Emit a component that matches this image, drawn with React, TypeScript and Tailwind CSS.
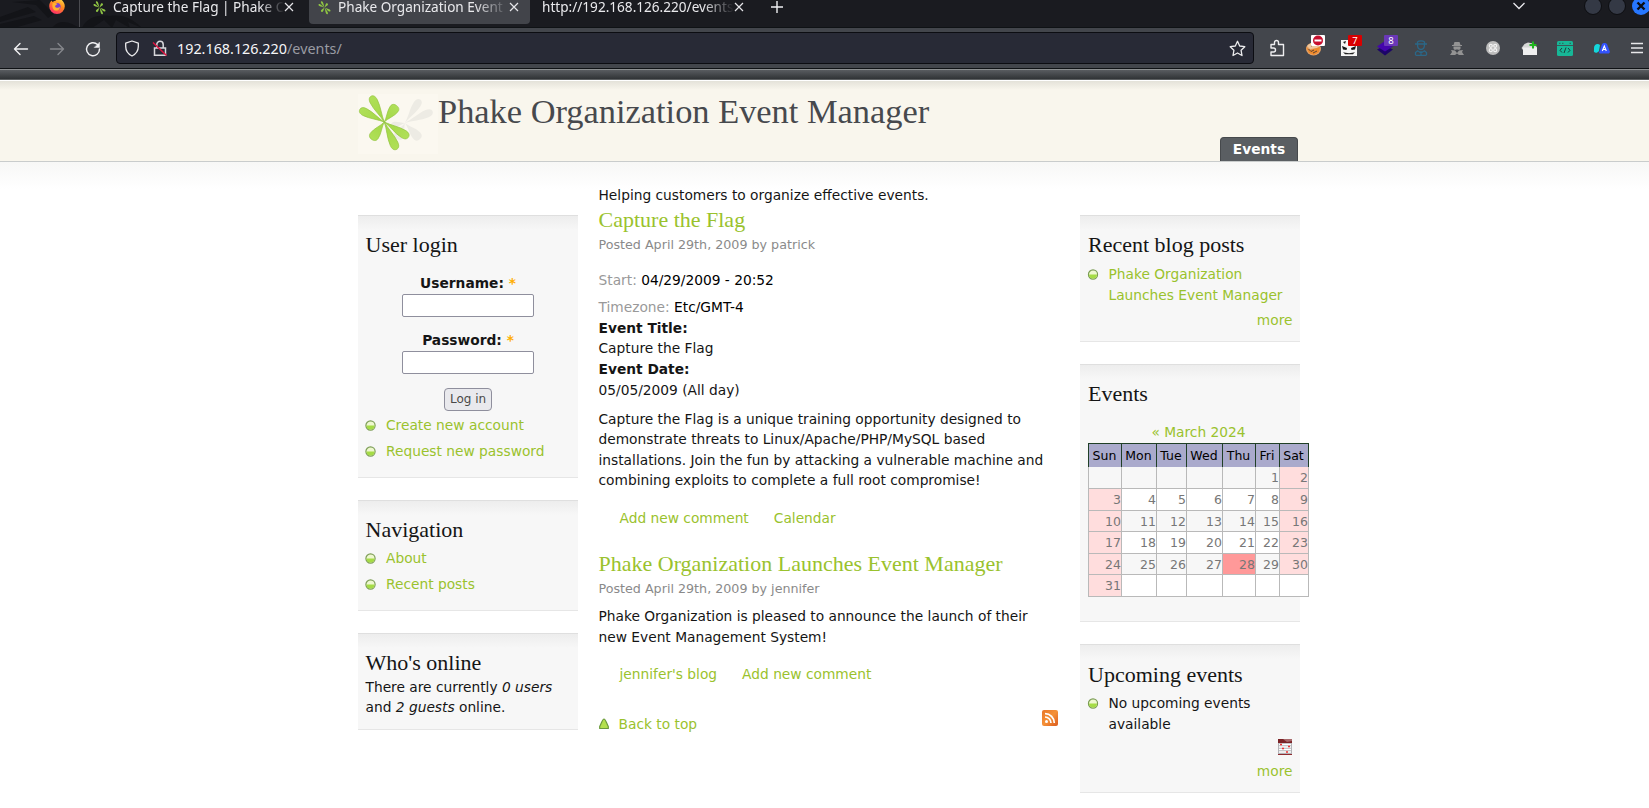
import type { ReactNode } from "react";

const PETAL = "M0 0C-.5 -7 -4.300 -16 -4.300 -24C-4.300 -28 -2.600 -30 0 -30C2.600 -30 4.300 -28 4.300 -24C4.300 -16 .5 -7 0 0Z";

type Petal = [angle: number, length: number, width: number];

const STAR: Petal[] = [
  [-27, 29, 0.9],
  [-63, 27.5, 0.9],
  [37, 20.5, 1.1],
  [122, 28.5, 0.95],
  [156, 30, 0.95],
  [216, 21.5, 1.1],
];
const SHADE: Petal[] = [
  [33, 28, 0.9],
  [67, 30, 0.9],
  [137, 22, 1.1],
  [206, 18, 1.1],
  [-100, 14, 0.7],
];

function Petals({ items }: { items: Petal[] }) {
  return (
    <>
      {items.map(([a, l, w]) => (
        <path key={a} d={PETAL} transform={`rotate(${a}) scale(${w} ${l / 30})`} />
      ))}
    </>
  );
}

function Logo() {
  return (
    <svg width="80" height="60" viewBox="0 0 80 60" className="block bg-[#fbf8f0]">
      <defs>
        <linearGradient id="leaf" gradientUnits="userSpaceOnUse" x1="0" y1="0" x2="0" y2="-30">
          <stop offset="0" stopColor="#a2d645" />
          <stop offset="1" stopColor="#b0e058" />
        </linearGradient>
      </defs>
      <g transform="translate(47 29)" fill="#edebe4">
        <Petals items={SHADE} />
      </g>
      <g transform="translate(26.300 28)" fill="url(#leaf)" stroke="#93c440" strokeWidth="0.7">
        <Petals items={STAR} />
      </g>
    </svg>
  );
}

function Favicon() {
  return (
    <svg width="15" height="15" viewBox="-31 -31 62 62" fill="#8fc544" className="shrink-0">
      <Petals items={STAR} />
    </svg>
  );
}

function Close() {
  return (
    <svg width="10" height="10" viewBox="0 0 10 10" stroke="#e6e6ea" strokeWidth="1.2" className="shrink-0">
      <path d="M1 1L9 9M9 1L1 9" />
    </svg>
  );
}

function Firefox() {
  return (
    <svg width="16" height="16" viewBox="0 0 16 16" className="shrink-0">
      <defs>
        <linearGradient id="ff" x1="0.8" y1="0" x2="0.3" y2="1">
          <stop offset="0" stopColor="#ffe14a" />
          <stop offset="0.45" stopColor="#ff8a1e" />
          <stop offset="1" stopColor="#ff2a6a" />
        </linearGradient>
      </defs>
      <path d="M8 1C9.5 .6 10 0 10 0C12.500 1.500 15.800 4 15.800 8.200A7.800 7.800 0 0 1 .2 8.200C.2 5.500 1.500 3.500 2.500 2.500L3.500 4C5 3 7 3 8 1Z" fill="url(#ff)" />
      <circle cx="8" cy="8.500" r="3.600" fill="#7a3fd0" />
      <path d="M3.500 5.500C5 4 7 5 8.500 6C7.500 7 6.500 7 6 8.500C7 10.500 10 10 11 8.500C11 12 8 13 6 12.500C3.500 11.500 3 8 3.500 5.500Z" fill="#ffb22e" />
    </svg>
  );
}

function TabBar() {
  return (
    <div className="relative flex h-7 items-start overflow-hidden border-b border-[#0f1215] bg-[#1a1b20] text-[13.600px] leading-5 text-[#e9e9ec]">
      <svg width="150" height="28" viewBox="0 0 150 28" className="absolute left-0 top-0" fill="#131418">
        <path d="M0 17L28 7L36 12L0 22ZM0 24L34 16L42 20L14 28H0ZM12 2L40 0L54 14L48 18L36 5ZM52 28C56 22 64 20 72 24L80 28ZM82 28C86 18 98 14 110 16C124 14 134 20 142 28L128 22L130 28L116 20L112 28L104 20L92 28Z" />
      </svg>
      <div className="relative flex h-7 w-20 shrink-0 justify-end border-r border-[#4a4b50] pr-[14px]">
        <div className="-mt-[2px]"><Firefox /></div>
      </div>
      <div className="relative -mt-[3px] flex h-5 w-[229px] shrink-0 items-center pl-3">
        <Favicon />
        <div className="ml-[6px] w-[171px] overflow-hidden whitespace-nowrap [mask-image:linear-gradient(to_right,black_86%,transparent)]">
          Capture the Flag | Phake C
        </div>
        <Close />
      </div>
      <div className="h-6 w-[221px] shrink-0 rounded-b-[4px] bg-[#42444a]">
        <div className="-mt-[3px] flex h-5 items-center pl-2">
          <Favicon />
          <div className="ml-[6px] w-[171px] overflow-hidden whitespace-nowrap [mask-image:linear-gradient(to_right,black_80%,transparent)]">
            Phake Organization Event
          </div>
          <Close />
        </div>
      </div>
      <div className="-mt-[3px] flex h-5 w-[231px] shrink-0 items-center pl-3">
        <div className="w-[192px] overflow-hidden whitespace-nowrap [mask-image:linear-gradient(to_right,black_84%,transparent)]">
          http://192.168.126.220/events
        </div>
        <Close />
      </div>
      <svg width="12" height="12" viewBox="0 0 12 12" stroke="#f0f0f2" strokeWidth="1.400" className="ml-[10px] mt-px">
        <path d="M6 0V12M0 6H12" />
      </svg>
      <svg width="14" height="8" viewBox="0 0 14 8" fill="none" stroke="#e8e8ec" strokeWidth="1.300" className="ml-auto mr-[58px] mt-[2px]">
        <path d="M1.500 1L7 6.500L12.500 1" />
      </svg>
      <svg width="65" height="20" viewBox="0 0 65 20" className="-mt-1 shrink-0">
        <circle cx="9" cy="10" r="8.500" fill="#343945" stroke="#0d0e11" />
        <circle cx="33" cy="10" r="8.500" fill="#343945" stroke="#0d0e11" />
        <circle cx="57" cy="10" r="9" fill="#2777ff" />
        <path d="M53.500 6.500L60.500 13.500M60.500 6.500L53.500 13.500" stroke="#0b0d12" strokeWidth="2.400" />
      </svg>
    </div>
  );
}

function Slot({ children, badge }: { children: ReactNode; badge?: ReactNode }) {
  return (
    <div className="relative flex h-5 w-9 shrink-0 items-center justify-center">
      {children}
      {badge}
    </div>
  );
}

function Extensions() {
  return (
    <>
      <Slot>
        <svg width="16" height="18" viewBox="0 0 16 18" fill="none" stroke="#eeeef0" strokeWidth="1.400" strokeLinejoin="round">
          <path d="M2 5.500H5.500V3.500A2 2 0 0 1 9.500 3.500V5.500H14.500V16.500H2V13H4.500A2 2 0 0 0 4.500 9H2Z" />
        </svg>
      </Slot>
      <Slot
        badge={
          <svg width="14" height="11" viewBox="0 0 14 11" className="absolute left-[16px] top-[-3px]">
            <rect width="14" height="11" rx="1" fill="#fff" />
            <circle cx="7" cy="5.500" r="5" fill="#c8102e" />
            <rect x="3.500" y="4.500" width="7" height="2" fill="#fff" />
          </svg>
        }
      >
        <svg width="17" height="15" viewBox="0 0 17 15">
          <ellipse cx="8.500" cy="8" rx="7.500" ry="6.500" fill="#e3a26a" />
          <path d="M2 5C5 1 12 1 15 5L12 7L5 8Z" fill="#f0c79c" />
          <path d="M1 6L5 9L15 6L14 11L9 14L4 12Z" fill="#f08b2b" />
          <path d="M3.500 8L6 10.500L9 9M8 12L12 10M6 5L9 4" stroke="#5c4334" strokeWidth="1" fill="none" />
        </svg>
      </Slot>
      <Slot
        badge={
          <div className="absolute left-[17px] top-[-3px] flex h-[11px] w-[14px] items-center justify-center rounded-[1px] bg-[#d90000] font-['Noto_Sans',sans-serif] text-[9.500px] leading-none text-white">7</div>
        }
      >
        <svg width="16" height="16" viewBox="0 0 16 16">
          <rect width="16" height="16" fill="#f5f5f5" />
          <path d="M1 6L6 8L5.500 10L2 9.500ZM15 6L10 8L10.500 10L14 9.500Z" fill="#151515" />
          <path d="M2 12C5 13.500 11 13.500 14 12L12 14.300H4ZM2 2L5 1L4 4Z" fill="#222" />
        </svg>
      </Slot>
      <Slot
        badge={
          <div className="absolute left-[17px] top-[-3px] flex h-[11px] w-[14px] items-center justify-center rounded-[1px] bg-[#6a38b8] font-['Noto_Sans',sans-serif] text-[9.500px] leading-none text-white">8</div>
        }
      >
        <svg width="16" height="16" viewBox="0 0 16 16">
          <path d="M0 9.500L8 5.500L16 9.500L8 15.500Z" fill="#1c0568" />
          <path d="M0 6.500L8 1L16 6.500L8 11.500Z" fill="#4405ac" />
        </svg>
      </Slot>
      <Slot>
        <svg width="14" height="16" viewBox="0 0 14 16" fill="none" stroke="#2b6787" strokeWidth="1.300">
          <path d="M3.500 3.500V2C5 .5 9 .5 10.500 2V3.500M1 4H13M3.500 4.500C3.500 8 5 9.500 7 9.500S10.500 8 10.500 4.500M7 11V15M4 11L7 13L10 11M1.500 15.300H12.500M4 10.500L1.500 12.500V15M10 10.500L12.500 12.500V15" />
        </svg>
      </Slot>
      <Slot>
        <svg width="14" height="15" viewBox="0 0 14 15" fill="#939393">
          <path d="M4.500 1H9.500L10.500 4H12V5H2V4H3.500Z" />
          <path d="M3.500 5.500H10.500V7.500C10 9 8.500 9 7 8.200C5.500 9 4 9 3.500 7.500Z" />
          <path d="M1 9L5 9.500L7 12L9 9.500L13 9L12 11L14 14H9L7 12.500L5 14H0L2 11Z" />
        </svg>
      </Slot>
      <Slot>
        <svg width="14" height="14" viewBox="0 0 14 14">
          <circle cx="7" cy="7" r="7" fill="#bcbcbc" />
          <g fill="none" stroke="#f2f2f2" strokeWidth="1.200">
            <circle cx="4.800" cy="4.800" r="1.500" />
            <circle cx="9.200" cy="4.800" r="1.500" />
            <circle cx="4.800" cy="9.200" r="1.500" />
            <circle cx="9.200" cy="9.200" r="1.500" />
          </g>
        </svg>
      </Slot>
      <Slot>
        <svg width="17" height="15" viewBox="0 0 17 15">
          <path d="M.5 7L3.500 3L7 1.500L12 2.500L16 6V14H2V9Z" fill="#d6d6d6" />
          <path d="M2 6.500H16V14H2Z" fill="#efefef" />
          <path d="M12 .5V7.500M8.500 4H15.500" stroke="#20b51f" strokeWidth="2" />
        </svg>
      </Slot>
      <Slot>
        <svg width="16" height="15" viewBox="0 0 16 15">
          <rect width="16" height="15" rx="1.500" fill="#17b797" />
          <path d="M0 4.500H16" stroke="#3f4b52" strokeWidth="0.900" />
          <path d="M2 2.300H3.500M5 2.300H6.500M12.500 2.300H14" stroke="#2b5f58" />
          <path d="M5 7L3 9.300L5 11.500M11 7L13 9.300L11 11.500M9 6.500L7 12" fill="none" stroke="#1d3b3a" />
        </svg>
      </Slot>
      <Slot>
        <svg width="17" height="12" viewBox="0 0 17 12">
          <path d="M1 6C1 2 5 1 7 3L6 9C4 12 0 11 1 8Z" fill="#14d6dc" />
          <path d="M6 11L9 2C10 .5 13 .5 14 2L16.800 9.500C17 11 16 11.500 15 11.500H7Z" fill="#3353fd" />
          <path d="M9.300 9L11.300 4L13.300 9M10 7.500H12.600" stroke="#fff" fill="none" strokeWidth="1.100" />
        </svg>
      </Slot>
      <Slot>
        <svg width="12" height="12" viewBox="0 0 12 12" stroke="#e8e8ea" strokeWidth="1.300">
          <path d="M0 1.500H12M0 6H12M0 10.500H12" />
        </svg>
      </Slot>
    </>
  );
}

function Toolbar() {
  return (
    <div className="flex h-[41px] items-center border-b border-[#0f1215] bg-[#43464c]">
      <svg width="116" height="20" viewBox="0 0 116 20" fill="none" strokeWidth="1.400" strokeLinejoin="round" strokeLinecap="round" className="mt-px shrink-0">
        <path d="M27.500 10H14.500M20 4.500L14.500 10L20 15.500" stroke="#f2f2f4" />
        <path d="M50.500 10H63.500M58 4.500L63.500 10L58 15.500" stroke="#85878b" />
        <path d="M97.500 5.500A6.500 6.500 0 1 0 99.500 10" stroke="#f2f2f4" />
        <path d="M99.500 3.500V8.500H94.500Z" fill="#f2f2f4" stroke="#f2f2f4" strokeWidth="0.500" />
      </svg>
      <div className="flex h-8 w-[1138px] shrink-0 items-center rounded-[4px] border border-[#0c0d12] bg-[#282a36] pl-[7px] pr-[7px] text-[14.350px] leading-5">
        <svg width="16" height="17" viewBox="0 0 16 17" fill="none" stroke="#ececee" strokeWidth="1.300" strokeLinejoin="round">
          <path d="M8 1L14.300 3.200V6.500C14.300 11 12 14 8 16C4 14 1.700 11 1.700 6.500V3.200Z" />
        </svg>
        <svg width="16" height="17" viewBox="0 0 16 17" fill="none" className="ml-3">
          <path d="M4.800 7.500V4.500A3.200 3.200 0 0 1 11.200 4.500V7.500M2.500 8H13.500V15.300H2.500Z" stroke="#d8d8dc" strokeWidth="1.500" />
          <path d="M1 2.500L14.500 15.500" stroke="#e0123f" strokeWidth="1.500" />
        </svg>
        <div className="ml-[9px] mt-[2px] text-[#f6f6f8]">
          192.168.126.220<span className="text-[#9a9ba3]">/events/</span>
        </div>
        <svg width="17" height="17" viewBox="0 0 17 17" fill="none" stroke="#ececee" strokeWidth="1.300" strokeLinejoin="round" className="ml-auto">
          <path d="M8.500 1.300L10.700 6L15.800 6.700L12.100 10.300L13 15.500L8.500 13L4 15.500L4.900 10.300L1.200 6.700L6.300 6Z" />
        </svg>
      </div>
      <div className="ml-[5px] flex"><Extensions /></div>
    </div>
  );
}

function Bullet() {
  return (
    <svg width="11" height="11" viewBox="0 0 11 11" className="block">
      <circle cx="5.500" cy="5.500" r="4.600" fill="#eef8cf" stroke="#7c9d55" strokeWidth="1.200" />
      <path d="M1.500 5.500H9.500A4 4 0 0 1 1.500 5.500Z" fill="#a5dc45" />
    </svg>
  );
}

function Item({ children, className = "", plain = false }: { children: ReactNode; className?: string; plain?: boolean }) {
  return (
    <li className={`-ml-px flex ${className}`}>
      <div className="mt-[5px] w-[21px] shrink-0"><Bullet /></div>
      <div className={plain ? "" : "text-[#9ac22d]"}>{children}</div>
    </li>
  );
}

function Block({ title, className, children }: { title: string; className: string; children: ReactNode }) {
  return (
    <section className={`w-[220px] border-b border-t border-b-[#e6e6e6] border-t-[#dfdfdf] bg-[#f7f7f7] bg-[linear-gradient(to_bottom,#ededed,#f7f7f7_14px)] pr-[7.500px] ${className}`}>
      <h2 className="h-[26px] whitespace-nowrap font-['Liberation_Serif',serif] text-[22px] leading-[25px]">{title}</h2>
      {children}
    </section>
  );
}

function Field({ label, className }: { label: string; className: string }) {
  return (
    <div className={`flex flex-col items-center ${className}`}>
      <label className="h-[21px] font-bold">
        {label}: <span className="text-[#ffae00]">*</span>
      </label>
      <input className="h-[23px] w-[132px] rounded-[2px] border border-[#8f8f9d] bg-white" />
    </div>
  );
}

const DAYS = ["Sun", "Mon", "Tue", "Wed", "Thu", "Fri", "Sat"];
const WEEKS = Array.from({ length: 6 }, (_, w) =>
  Array.from({ length: 7 }, (_, d) => {
    const n = w * 7 + d - 4;
    return n >= 1 && n <= 31 ? n : null;
  }),
);

function dayColor(day: number | null, col: number, week: number) {
  if (day === 28) return "bg-[#ff9999]";
  if (day !== null && (col === 0 || col === 6)) return "bg-[#ffdddd]";
  return week % 2 ? "bg-white" : "bg-[#f7f7f7]";
}

function Calendar() {
  return (
    <div className="mt-[15px] w-[221px]">
      <div className="h-[21px] text-center text-[#9ac22d]">« March 2024</div>
      <div className="grid h-6 grid-cols-[33px_35px_30px_36px_33px_24px_29px] border-l border-t border-[#1f3f26] bg-[#aaaacc] text-[12.500px] leading-[23px] text-black">
        {DAYS.map((d) => (
          <div key={d} className="border-b border-r border-[#1f3f26] pr-px text-center">{d}</div>
        ))}
      </div>
      <div className="grid grid-cols-[33px_35px_30px_36px_33px_24px_29px] grid-rows-[22px_22px_21px_22px_21px_22px] border-l border-[#b9b9b9] text-[12.500px] leading-[21px] text-[#777]">
        {WEEKS.map((week, w) =>
          week.map((day, c) => (
            <div key={`${w}-${c}`} className={`border-b border-r border-[#b9b9b9] text-right ${dayColor(day, c, w)}`}>
              {day}
            </div>
          )),
        )}
      </div>
    </div>
  );
}

function CalendarIcon() {
  return (
    <svg width="14" height="16" viewBox="0 0 14 16">
      <rect width="14" height="16" fill="#b4b4b8" />
      <rect width="14" height="4" fill="#7b2326" />
      <path d="M5 0H14V2L9 3Z" fill="#a86a6c" />
      <path d="M1 5.500H13M1 8H13M1 10.500H13M1 13H13" stroke="#fff" strokeWidth="1.500" />
      <path d="M2 5.500H4M10 7.500H12M4 9.500H6M8 13H10" stroke="#e33" strokeWidth="1.500" />
      <rect y="15" width="14" height="1" fill="#8f2c30" />
    </svg>
  );
}

function Rss() {
  return (
    <svg width="16" height="16" viewBox="0 0 16 16">
      <defs>
        <linearGradient id="rss" x1="0" y1="0" x2="1" y2="1">
          <stop offset="0" stopColor="#e87628" />
          <stop offset="0.500" stopColor="#f59238" />
          <stop offset="1" stopColor="#da5a1e" />
        </linearGradient>
      </defs>
      <rect width="16" height="16" rx="2" fill="url(#rss)" />
      <circle cx="4.500" cy="11.500" r="1.500" fill="#fff" />
      <path d="M3 7A6 6 0 0 1 9 13M3 3.700A9.300 9.300 0 0 1 12.300 13" fill="none" stroke="#fff" strokeWidth="1.700" />
    </svg>
  );
}

const HEADING = "h-[26px] whitespace-nowrap font-['Liberation_Serif',serif] text-[22px] leading-[25px] text-[#9ac22d]";
const BYLINE = "mt-[2px] h-[19px] text-[12.700px] leading-[19px] text-[#8a8a8a]";
const LINKS = "flex h-5 gap-[25px] pl-[21px] text-[#9ac22d]";

export default function App() {
  return (
    <div className="h-[808px] w-[1649px] overflow-hidden bg-white font-['DejaVu_Sans',sans-serif] text-[13.770px] leading-[20.400px] text-[#151515]">
      <div className="font-['Noto_Sans',sans-serif]">
        <TabBar />
        <Toolbar />
      </div>
      <div className="h-[11px] border-b border-t border-b-[#5b5e60] border-t-[#8d9092] bg-[linear-gradient(to_bottom,#595c60,#303336)]" />
      <div className="h-px bg-white" />

      <header className="h-[81px] border-b border-[#c9cccc] bg-[#f9f6ed] bg-[linear-gradient(to_bottom,#e4e2d9,#f9f6ed_9px)]">
        <div className="ml-[358px] flex h-20 w-[942px]">
          <div className="mt-[13px] h-[60px]"><Logo /></div>
          <h1 className="mt-[10px] h-10 whitespace-nowrap font-['Liberation_Serif',serif] text-[34.400px] leading-10 text-[#47494d]">
            Phake Organization Event Manager
          </h1>
          <div className="ml-auto mr-[2px] mt-14 h-6 w-[78px] rounded-t-[4px] border border-b-0 border-[#46494c] bg-[#5a5e62] text-center font-bold leading-[22px] text-white">
            Events
          </div>
        </div>
      </header>

      <div className="flex bg-[linear-gradient(to_bottom,#f7f7f6,#ffffff_27px)] pl-[358px]">
        <aside className="flex flex-col gap-[22px] pt-[53px]">
          <Block title="User login" className="h-[263px] pl-[7.500px] pt-4">
            <Field label="Username" className="mt-[15px]" />
            <Field label="Password" className="mt-[13px]" />
            <div className="mt-[14px] flex h-[23px] justify-center">
              <button className="h-[23px] w-12 whitespace-nowrap rounded-[4px] border border-[#8f8f9d] bg-[#e9e9ed] pb-px text-[12px] leading-5 text-[#494949]">
                Log in
              </button>
            </div>
            <ul className="ml-[0.500px] mt-1">
              <Item className="h-[26px]">Create new account</Item>
              <Item>Request new password</Item>
            </ul>
          </Block>
          <Block title="Navigation" className="h-[111px] pl-[7.500px] pt-4">
            <ul className="ml-[0.500px] mt-[5px]">
              <Item className="h-[26px]">About</Item>
              <Item>Recent posts</Item>
            </ul>
          </Block>
          <Block title="Who's online" className="h-[97px] pl-[7.500px] pt-4">
            <p className="mt-px whitespace-nowrap">
              There are currently <em>0 users</em>
              <br />
              and <em>2 guests</em> online.
            </p>
          </Block>
        </aside>

        <main className="ml-5 w-[461px] pl-[0.500px] pt-[23px]">
          <p className="h-5">Helping customers to organize effective events.</p>
          <h2 className={`mt-[2px] ${HEADING}`}>Capture the Flag</h2>
          <p className={BYLINE}>Posted April 29th, 2009 by patrick</p>
          <p className="mt-4 h-5 text-black"><span className="text-[#999]">Start:</span> 04/29/2009 - 20:52</p>
          <p className="mt-[7px] h-5 text-black"><span className="text-[#999]">Timezone:</span> Etc/GMT-4</p>
          <p className="mt-px h-5 font-bold">Event Title:</p>
          <p className="h-[21px]">Capture the Flag</p>
          <p className="h-[21px] font-bold">Event Date:</p>
          <p className="h-5">05/05/2009 (All day)</p>
          <p className="mt-[9px] h-[82px] whitespace-nowrap">
            Capture the Flag is a unique training opportunity designed to
            <br />
            demonstrate threats to Linux/Apache/PHP/MySQL based
            <br />
            installations. Join the fun by attacking a vulnerable machine and
            <br />
            combining exploits to complete a full root compromise!
          </p>
          <div className={`mt-[17px] ${LINKS}`}>
            <a>Add new comment</a>
            <a>Calendar</a>
          </div>
          <h2 className={`mt-[23px] ${HEADING}`}>Phake Organization Launches Event Manager</h2>
          <p className={BYLINE}>Posted April 29th, 2009 by jennifer</p>
          <p className="mt-2 h-[41px] whitespace-nowrap leading-[21px]">
            Phake Organization is pleased to announce the launch of their
            <br />
            new Event Management System!
          </p>
          <div className={`mt-[17px] ${LINKS}`}>
            <a>jennifer's blog</a>
            <a>Add new comment</a>
          </div>
          <div className="mt-[26px] flex items-start text-[#9ac22d]">
            <svg width="11" height="12" viewBox="0 0 11 12" className="mt-2">
              <path d="M5 1C6.500 1 7 4 9.300 8.500V10.500H.7V8.500C3 4 3.500 1 5 1Z" fill="#b4e04e" stroke="#6b9a3c" strokeWidth="1.200" strokeLinejoin="round" />
            </svg>
            <a className="ml-[9px] mt-1">Back to top</a>
            <div className="ml-auto mr-px"><Rss /></div>
          </div>
        </main>

        <aside className="ml-[21px] flex flex-col gap-[22px] pt-[53px]">
          <Block title="Recent blog posts" className="h-[127px] pl-2 pt-4">
            <ul className="mt-[6px] h-[46px] whitespace-nowrap">
              <Item className="translate-x-[0.500px]">
                <p className="h-[21px]">Phake Organization</p>
                <p>Launches Event Manager</p>
              </Item>
            </ul>
            <div className="text-right text-[#9ac22d]">more</div>
          </Block>
          <Block title="Events" className="h-[258px] pl-2 pt-4">
            <Calendar />
          </Block>
          <Block title="Upcoming events" className="h-[149px] pl-2 pt-[17px]">
            <ul className="mt-[5px] h-[46px]">
              <Item plain className="translate-x-[0.500px]">
                <p className="h-[21px]">No upcoming events</p>
                <p>available</p>
              </Item>
            </ul>
            <div className="flex justify-end pr-[0.500px]"><CalendarIcon /></div>
            <div className="mt-[6px] text-right text-[#9ac22d]">more</div>
          </Block>
        </aside>
      </div>
    </div>
  );
}
